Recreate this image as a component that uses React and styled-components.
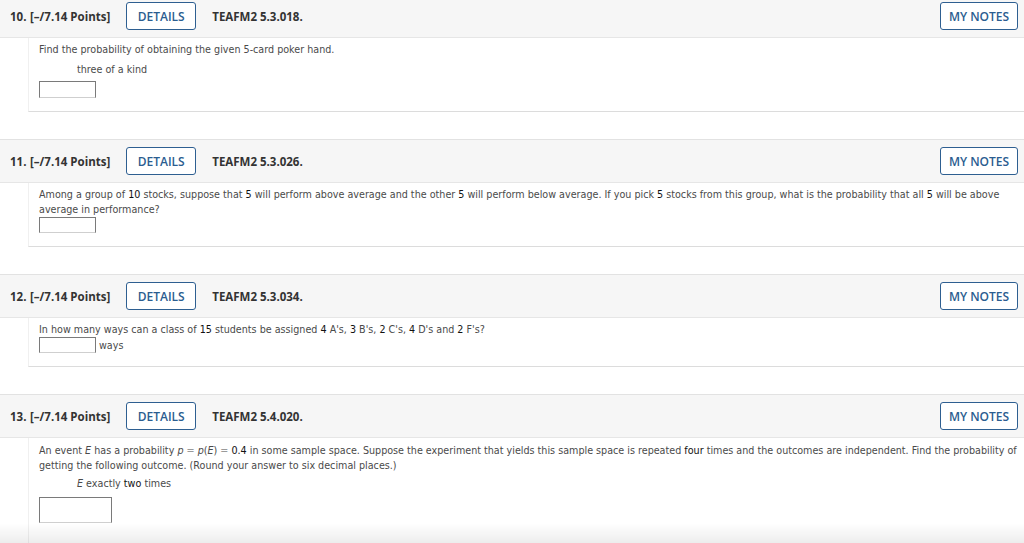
import React from 'react'
import styled, { createGlobalStyle } from 'styled-components'

const GlobalStyle = createGlobalStyle`
  html, body {
    margin: 0;
    padding: 0;
    background: #ffffff;
    overflow: hidden;
  }
`

const Page = styled.div`
  display: flex;
  flex-direction: column;
  gap: 27px;
  margin-top: -6px;
`

const Question = styled.section`
  display: flex;
  flex-direction: column;
`

const Header = styled.div`
  display: flex;
  align-items: center;
  height: 44px;
  box-sizing: border-box;
  padding: 0 6px 0 10px;
  background: #f6f6f6;
  border-top: 1px solid #e2e2e2;
  border-bottom: 1px solid #e6e6e6;
  font-family: 'Open Sans', 'Liberation Sans', sans-serif;
  font-weight: 700;
  font-size: 11.5px;
  color: #333333;
`

const Num = styled.span`
  width: 20px;
`

const Points = styled.span``

const OutlineButton = styled.button`
  margin-left: ${(p) => p.$ml};
  width: ${(p) => p.$w};
  height: 28px;
  padding: 0;
  background: #ffffff;
  border: 1.5px solid #2e5f91;
  border-radius: 3px;
  font-family: 'Open Sans', 'Liberation Sans', sans-serif;
  font-weight: 600;
  font-size: 12px;
  color: #2b5d90;
  cursor: pointer;
`

const Code = styled.span`
  margin-left: 16px;
`

const Body = styled.div`
  margin-left: 28px;
  padding: ${(p) => p.$pad};
  border-left: 1px solid #f0f0f0;
  border-bottom: 1px solid #dcdcdc;
  font-family: 'DejaVu Sans', Verdana, sans-serif;
  font-size: 9.6px;
  line-height: 15px;
  color: #4a4a4a;

  b {
    font-weight: 400;
    color: #111111;
  }
`

const Text = styled.div``

const Indented = styled.div`
  padding-left: 38px;
  margin-top: ${(p) => p.$mt || '5px'};
`

const Op = styled.span`
  color: #9a9a9a;
`

const AnswerRow = styled.div`
  display: flex;
  align-items: center;
  gap: 3px;
  margin-top: ${(p) => p.$mt || '0px'};
`

const AnswerBox = styled.div`
  box-sizing: border-box;
  width: ${(p) => p.$w || '57px'};
  height: ${(p) => p.$h || '17px'};
  border: 1px solid #7a7a7a;
  border-bottom-color: #cfcfcf;
  background: #ffffff;
`

const Unit = styled.span``

const BottomFade = styled.div`
  position: fixed;
  left: 0;
  right: 0;
  bottom: 0;
  height: 20px;
  background: linear-gradient(rgba(0, 0, 0, 0), rgba(0, 0, 0, 0.07));
  pointer-events: none;
`

const questions = [
  {
    num: '10.',
    code: 'TEAFM2 5.3.018.',
    body: (
      <>
        <Text>Find the probability of obtaining the given 5-card poker hand.</Text>
        <Indented>three of a kind</Indented>
        <AnswerRow $mt="4px">
          <AnswerBox />
        </AnswerRow>
      </>
    ),
    pad: '4px 4px 13px 10px',
  },
  {
    num: '11.',
    code: 'TEAFM2 5.3.026.',
    body: (
      <>
        <Text>
          Among a group of <b>10</b> stocks, suppose that <b>5</b> will perform above average and the other <b>5</b> will
          perform below average. If you pick <b>5</b> stocks from this group, what is the probability that all <b>5</b> will be
          above average in performance?
        </Text>
        <AnswerRow>
          <AnswerBox $h="16px" />
        </AnswerRow>
      </>
    ),
    pad: '4px 4px 13px 10px',
  },
  {
    num: '12.',
    code: 'TEAFM2 5.3.034.',
    body: (
      <>
        <Text>
          In how many ways can a class of <b>15</b> students be assigned <b>4</b> A's, <b>3</b> B's, <b>2</b> C's, <b>4</b> D's
          and <b>2</b> F's?
        </Text>
        <AnswerRow>
          <AnswerBox $h="16px" />
          <Unit>ways</Unit>
        </AnswerRow>
      </>
    ),
    pad: '4px 4px 13px 10px',
  },
  {
    num: '13.',
    code: 'TEAFM2 5.4.020.',
    body: (
      <>
        <Text>
          An event <i>E</i> has a probability <i>p</i> <Op>=</Op> <i>p</i>(<i>E</i>) <Op>=</Op> <b>0.4</b> in some sample
          space. Suppose the experiment that yields this sample space is repeated <b>four</b> times and the outcomes are
          independent. Find the probability of getting the following outcome. (Round your answer to six decimal places.)
        </Text>
        <Indented $mt="3px">
          <i>E</i> exactly <b>two</b> times
        </Indented>
        <AnswerRow $mt="6px">
          <AnswerBox $w="73px" $h="26px" />
        </AnswerRow>
      </>
    ),
    pad: '5px 2px 30px 10px',
  },
]

export default function App() {
  return (
    <>
      <GlobalStyle />
      <Page>
        {questions.map((q) => (
          <Question key={q.num}>
            <Header>
              <Num>{q.num}</Num>
              <Points>[–/7.14 Points]</Points>
              <OutlineButton $ml="16px" $w="70px">DETAILS</OutlineButton>
              <Code>{q.code}</Code>
              <OutlineButton $ml="auto" $w="78px">MY NOTES</OutlineButton>
            </Header>
            <Body $pad={q.pad}>{q.body}</Body>
          </Question>
        ))}
      </Page>
      <BottomFade />
    </>
  )
}
